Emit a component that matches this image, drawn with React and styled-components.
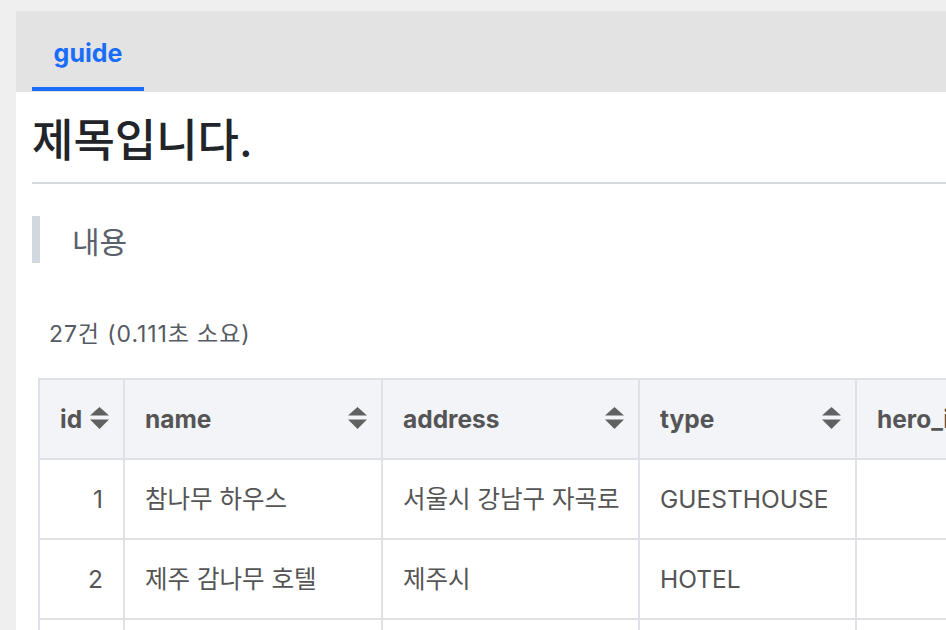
import React from "react";
import styled, { createGlobalStyle } from "styled-components";

const Global = createGlobalStyle`
  html, body { margin: 0; padding: 0; overflow: hidden; }
  body {
    background: #efefef;
    font-family: Inter, "Noto Sans CJK KR", "Noto Sans", sans-serif;
    color: #212529;
  }
  * { box-sizing: border-box; }
`;

const Page = styled.div`
  padding: 11px 0 0 16px;
`;

const Panel = styled.div`
  background: #ffffff;
  min-height: 700px;
`;

const TabBar = styled.div`
  display: flex;
  height: 81px;
  padding-left: 16px;
  background: #e3e3e3;
`;

const Tab = styled.div`
  height: 80px;
  width: 112px;
  display: flex;
  align-items: center;
  justify-content: center;
  padding-top: 7px;
  font-size: 25px;
  font-weight: 700;
  color: ${(p) => (p.$active ? "#1a6dfb" : "#555")};
  border-bottom: 4px solid ${(p) => (p.$active ? "#1a6dfb" : "transparent")};
`;

const Content = styled.div`
  padding: 24px 0 0 16px;
`;

const Title = styled.h1`
  margin: 0;
  font-size: 45px;
  line-height: 50px;
  font-weight: 500;
  color: #212529;
`;

const Rule = styled.hr`
  margin: 16px 0 0;
  border: 0;
  height: 2px;
  background: #d7dbe0;
`;

const Quote = styled.blockquote`
  margin: 32px 0 0;
  height: 47px;
  display: flex;
  align-items: center;
  padding-left: 32px;
  border-left: 8px solid #d1d8df;
  font-size: 30px;
  color: #59616b;
`;

const Count = styled.div`
  margin: 59px 0 0 17px;
  font-size: 23px;
  line-height: 24px;
  letter-spacing: 0.9px;
  color: #555b63;
`;

const Table = styled.table`
  margin: 32px 0 0 6px;
  border-collapse: separate;
  border-spacing: 0;
  table-layout: fixed;
  width: 1576px;
  border-top: 2px solid #dfe1e6;
  border-left: 2px solid #dfe1e6;
  font-size: 24.5px;
  color: #555;
`;

const Th = styled.th`
  width: ${(p) => p.$w}px;
  padding: 23px 14px 23px 20px;
  line-height: 32px;
  background: #f3f4f8;
  border-right: 2px solid #dfe1e6;
  border-bottom: 2px solid #dfe1e6;
  text-align: left;
  font-weight: 700;
  white-space: nowrap;
  overflow: hidden;
`;

const HeadInner = styled.div`
  display: flex;
  align-items: center;
  justify-content: space-between;
`;

const Td = styled.td`
  padding: 23px 20px 23px 20px;
  line-height: 32px;
  border-right: 2px solid #dfe1e6;
  border-bottom: 2px solid #dfe1e6;
  text-align: ${(p) => (p.$right ? "right" : "left")};
  white-space: nowrap;
  overflow: hidden;
`;

const SortIcon = () => (
  <svg width="19" height="22" viewBox="0 0 19 22" style={{ flex: "none", marginTop: "-3px" }}>
    <path d="M9.5 0 L19 8.5 L0 8.5 Z" fill="#616161" />
    <path d="M0 12.5 L19 12.5 L9.5 22 Z" fill="#616161" />
  </svg>
);

const columns = [
  { key: "id", w: 85 },
  { key: "name", w: 258 },
  { key: "address", w: 257 },
  { key: "type", w: 217 },
  { key: "hero_image", w: 420 },
  { key: "created_at", w: 337 },
];

const rows = [
  { id: 1, name: "참나무 하우스", address: "서울시 강남구 자곡로", type: "GUESTHOUSE", hero_image: "", created_at: "" },
  { id: 2, name: "제주 감나무 호텔", address: "제주시", type: "HOTEL", hero_image: "", created_at: "" },
  { id: 3, name: "부산 바다 호텔", address: "부산시 해운대구", type: "HOTEL", hero_image: "", created_at: "" },
];

export default function App() {
  return (
    <>
      <Global />
      <Page>
        <Panel>
          <TabBar>
            <Tab $active>guide</Tab>
          </TabBar>
          <Content>
            <Title>제목입니다.</Title>
            <Rule />
            <Quote>내용</Quote>
            <Count>27건 (0.111초 소요)</Count>
            <Table>
              <thead>
                <tr>
                  {columns.map((c) => (
                    <Th key={c.key} $w={c.w}>
                      <HeadInner>
                        <span>{c.key}</span>
                        <SortIcon />
                      </HeadInner>
                    </Th>
                  ))}
                </tr>
              </thead>
              <tbody>
                {rows.map((r) => (
                  <tr key={r.id}>
                    {columns.map((c) => (
                      <Td key={c.key} $right={c.key === "id"}>
                        {r[c.key]}
                      </Td>
                    ))}
                  </tr>
                ))}
              </tbody>
            </Table>
          </Content>
        </Panel>
      </Page>
    </>
  );
}
